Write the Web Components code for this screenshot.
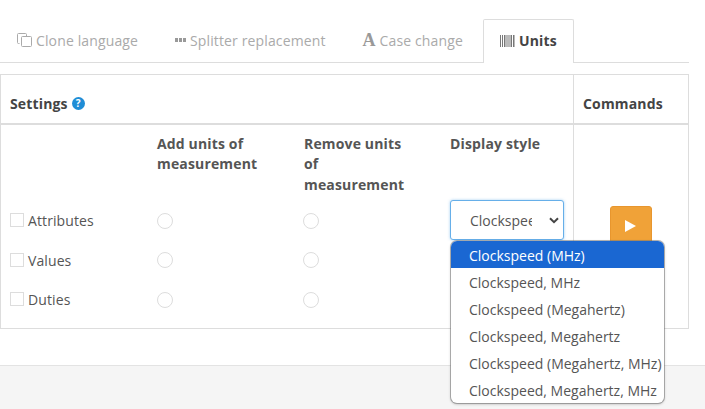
<!DOCTYPE html>
<html>
<head>
<meta charset="utf-8">
<title>Units</title>
<style>
  html, body { margin: 0; padding: 0; background: #fff; }
  body { font-family: "Open Sans", sans-serif; font-size: 14px; color: #555; overflow: hidden; }
</style>
</head>
<body>
<units-page></units-page>

<script>
class TabItem extends HTMLElement {
    constructor() {
        super();
        const root = this.attachShadow({ mode: 'open' });
        root.innerHTML = `
            <style>
                :host {
                    display: flex;
                    align-items: center;
                    gap: 4px;
                    height: 40px;
                    padding: 0 16px 2px;
                    margin-right: 3px;
                    border: 1px solid transparent;
                    border-bottom: 0;
                    border-radius: 2px 2px 0 0;
                    color: #aaa;
                    font-size: 14px;
                    letter-spacing: .13px;
                    white-space: nowrap;
                }
                :host([active]) {
                    color: #444;
                    font-weight: 700;
                    letter-spacing: .17px;
                    background: #fff;
                    border-color: #ddd;
                    height: 41px;
                    margin-bottom: -1px;
                }
            </style>
            <slot name="icon"></slot><slot></slot>
        `;
    }
}

class TabBar extends HTMLElement {
    constructor() {
        super();
        const root = this.attachShadow({ mode: 'open' });
        root.innerHTML = `
            <style>
                :host {
                    display: flex;
                    align-items: flex-end;
                    width: 689px;
                    height: 43px;
                    margin-top: 19px;
                    border-bottom: 1px solid #ddd;
                }
            </style>
            <slot></slot>
        `;
    }
}

class UnitRow extends HTMLElement {
    constructor() {
        super();
        const root = this.attachShadow({ mode: 'open' });
        root.innerHTML = `
            <style>
                :host {
                    display: grid;
                    grid-template-columns: 156px 146px 147px;
                    align-items: center;
                    height: 39.5px;
                    font-size: 14px;
                    letter-spacing: .1px;
                    color: #555;
                }
                .name { display: flex; align-items: center; gap: 4px; padding-left: 9px; }
                .box { width: 12px; height: 12px; border: 1px solid #ddd; margin-top: -1px; flex: none; }
                .radio { width: 14px; height: 14px; border: 1px solid #ddd; border-radius: 50%; }
            </style>
            <div class="name"><span class="box"></span><slot></slot></div>
            <div><div class="radio"></div></div>
            <div><div class="radio"></div></div>
        `;
    }
}

class StyleSelect extends HTMLElement {
    constructor() {
        super();
        const root = this.attachShadow({ mode: 'open' });
        root.innerHTML = `
            <style>
                :host {
                    display: block;
                    position: relative;
                    width: 114px;
                    height: 40px;
                    font-size: 14px;
                    letter-spacing: 0;
                    color: #555;
                }
                .control {
                    box-sizing: border-box;
                    display: flex;
                    align-items: center;
                    height: 40px;
                    padding-left: 19px;
                    border: 1px solid #66afe9;
                    border-radius: 3px;
                    box-shadow: 0 0 3px rgba(102, 175, 233, .6);
                    background: #fff;
                }
                .value { width: 62px; overflow: hidden; white-space: nowrap; }
                .control svg { margin-left: 17px; }
                .menu {
                    position: absolute;
                    z-index: 5;
                    left: 1px;
                    top: 41px;
                    width: 213px;
                    box-sizing: border-box;
                    background: #fff;
                    border-radius: 6px;
                    overflow: hidden;
                    box-shadow: 0 0 0 1px rgba(120, 120, 120, .55), 0 1px 3px rgba(0, 0, 0, .3);
                }
                .menu div {
                    box-sizing: border-box;
                    height: 27px;
                    line-height: 27px;
                    padding: 1px 0 0 18px;
                    white-space: nowrap;
                }
                .menu div.on { background: #1a67d2; color: #fff; }
            </style>
            <div class="control">
                <span class="value">Clockspeed (MHz)</span>
                <svg width="10" height="7" viewBox="0 0 10 7"><path d="M1 1.200 5 5.200 9 1.200" fill="none" stroke="#444" stroke-width="2"/></svg>
            </div>
            <div class="menu">
                <div class="on">Clockspeed (MHz)</div>
                <div>Clockspeed, MHz</div>
                <div>Clockspeed (Megahertz)</div>
                <div>Clockspeed, Megahertz</div>
                <div>Clockspeed (Megahertz, MHz)</div>
                <div>Clockspeed, Megahertz, MHz</div>
            </div>
        `;
    }
}

class SettingsPanel extends HTMLElement {
    constructor() {
        super();
        const root = this.attachShadow({ mode: 'open' });
        root.innerHTML = `
            <style>
                :host {
                    display: grid;
                    grid-template-columns: 572px 115px;
                    grid-template-rows: 50px 203px;
                    width: 689px;
                    box-sizing: border-box;
                    margin-top: 11px;
                    border: 1px solid #ddd;
                    font-size: 14px;
                    letter-spacing: .15px;
                }
                .head {
                    display: flex;
                    align-items: center;
                    gap: 4px;
                    padding: 8px 0 0 9px;
                    border-bottom: 2px solid #ddd;
                    font-weight: 700;
                    color: #444;
                }
                .head.cmd { border-left: 1px solid #ddd; }
                .help {
                    width: 13px;
                    height: 13px;
                    border-radius: 50%;
                    background: #1f8dd6;
                    color: #fff;
                    font-size: 10px;
                    line-height: 13px;
                    text-align: center;
                    letter-spacing: 0;
                }
                .body { display: grid; grid-template-columns: 449px 114px; }
                .titles {
                    display: grid;
                    grid-template-columns: 156px 147px 146px;
                    height: 67px;
                    padding-top: 9px;
                    font-weight: 700;
                    line-height: 20.4px;
                    color: #555;
                }
                .titles .w { width: 106px; }
                .select-title {
                    padding-top: 9px;
                    height: 66px;
                    box-sizing: border-box;
                    margin-bottom: 9px;
                    font-weight: 700;
                    line-height: 20.4px;
                    color: #555;
                }
                .run-cell { border-left: 1px solid #ddd; display: flex; justify-content: center; padding-top: 81px; padding-right: 1px; }
                .run {
                    width: 42px;
                    height: 40px;
                    box-sizing: border-box;
                    border: 1px solid #e8962e;
                    border-radius: 3px;
                    background: #f0a238;
                    display: flex;
                    align-items: center;
                    justify-content: center;
                }
            </style>
            <div class="head"><span>Settings</span><span class="help">?</span></div>
            <div class="head cmd">Commands</div>
            <div class="body">
                <div>
                    <div class="titles">
                        <div></div>
                        <div class="w">Add units of measurement</div>
                        <div class="w">Remove units of measurement</div>
                    </div>
                    <slot></slot>
                </div>
                <div>
                    <div class="select-title">Display style</div>
                    <style-select></style-select>
                </div>
            </div>
            <div class="run-cell">
                <div class="run"><svg width="11" height="12" viewBox="0 0 11 12"><path d="M0 0 11 6 0 12Z" fill="#fff"/></svg></div>
            </div>
        `;
    }
}

class PageFooter extends HTMLElement {
    constructor() {
        super();
        this.attachShadow({ mode: 'open' }).innerHTML = `
            <style>
                :host {
                    display: block;
                    height: 43px;
                    margin-top: 36px;
                    background: #f5f5f5;
                    border-top: 1px solid #e3e3e3;
                }
            </style>
        `;
    }
}

class UnitsPage extends HTMLElement {
    constructor() {
        super();
        this.attachShadow({ mode: 'open' }).innerHTML = `
            <style>
                :host { display: flex; flex-direction: column; width: 705px; height: 409px; }
                svg { display: block; flex: none; }
                .serif { font-family: "Liberation Serif", serif; font-weight: 700; font-size: 18px; color: #999; line-height: 1; letter-spacing: 0; }
            </style>
            <tab-bar>
                <tab-item>
                    <svg slot="icon" width="15" height="14" viewBox="0 0 15 14"><path d="M2.500 10.500H1.500a1 1 0 0 1-1-1V1.500a1 1 0 0 1 1-1h7a1 1 0 0 1 1 1v1.500" fill="none" stroke="#aaa"/><rect x="4.500" y="3.500" width="10" height="10" rx="1" fill="none" stroke="#aaa"/></svg>
                    Clone language
                </tab-item>
                <tab-item>
                    <svg slot="icon" width="11" height="4" viewBox="0 0 11 4"><path d="M0 0h3v4H0zM4 0h3v4H4zM8 0h3v4H8z" fill="#999"/></svg>
                    Splitter replacement
                </tab-item>
                <tab-item>
                    <span slot="icon" class="serif">A</span>
                    Case change
                </tab-item>
                <tab-item active>
                    <svg slot="icon" width="15" height="12" viewBox="0 0 15 12"><path d="M0 0h1v12H0zM2 0h1v12H2zM4 0h1.500v12H4zM6.500 0h1v12h-1zM8.500 0h1v12h-1zM10.500 0h1.500v12h-1.500zM13 0h1.500v12H13z" fill="#777"/></svg>
                    Units
                </tab-item>
            </tab-bar>
            <settings-panel>
                <unit-row>Attributes</unit-row>
                <unit-row>Values</unit-row>
                <unit-row>Duties</unit-row>
            </settings-panel>
            <page-footer></page-footer>
        `;
    }
}

customElements.define('tab-item', TabItem);
customElements.define('tab-bar', TabBar);
customElements.define('unit-row', UnitRow);
customElements.define('style-select', StyleSelect);
customElements.define('settings-panel', SettingsPanel);
customElements.define('page-footer', PageFooter);
customElements.define('units-page', UnitsPage);
</script>
</body>
</html>
